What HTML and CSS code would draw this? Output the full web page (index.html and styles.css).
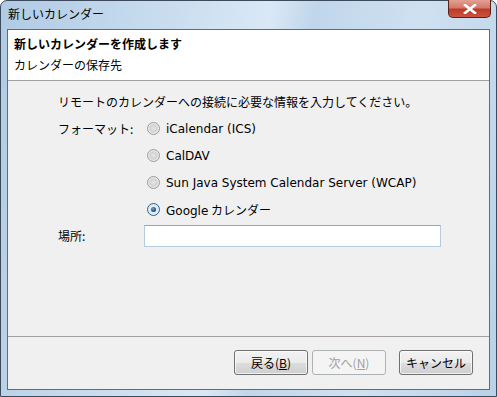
FILE: index.html
```html
<!DOCTYPE html>
<html lang="ja">
<head>
<meta charset="utf-8">
<link rel="stylesheet" href="styles.css">
</head>
<body>
<div class="window">
  <div class="titlebar">
    <span class="title">新しいカレンダー</span>
    <div class="close">
      <svg width="14" height="10" viewBox="0 0 14 10"><path d="M2 1 L12 9 M12 1 L2 9" stroke="#fff" stroke-width="2.6" stroke-linecap="square"/></svg>
    </div>
  </div>
  <div class="client">
    <div class="header">
      <div class="header-title">新しいカレンダーを作成します</div>
      <div class="header-sub">カレンダーの保存先</div>
    </div>
    <div class="body">
      <div class="intro">リモートのカレンダーへの接続に必要な情報を入力してください。</div>
      <div class="form">
        <div class="label">フォーマット:</div>
        <div class="radios">
          <div class="radio-row"><span class="radio"></span><span class="latin">iCalendar (ICS)</span></div>
          <div class="radio-row"><span class="radio"></span><span class="latin">CalDAV</span></div>
          <div class="radio-row"><span class="radio"></span><span class="latin">Sun Java System Calendar Server (WCAP)</span></div>
          <div class="radio-row"><span class="radio checked"></span><span><span class="latin">Google</span> カレンダー</span></div>
        </div>
        <div class="label loc-label">場所:</div>
        <div class="input"></div>
      </div>
    </div>
    <div class="footer">
      <button class="btn">戻る(<u>B</u>)</button>
      <button class="btn disabled">次へ(<u>N</u>)</button>
      <button class="btn cancel">キャンセル</button>
    </div>
  </div>
</div>
</body>
</html>
```
FILE: styles.css
```css
html, body {
  margin: 0;
  padding: 0;
}
body {
  width: 497px;
  height: 397px;
  overflow: hidden;
  font-family: "Noto Sans CJK JP", "DejaVu Sans", sans-serif;
  font-size: 12px;
  color: #000;
  background: #ffffff;
}
.latin {
  font-family: "DejaVu Sans", "Noto Sans CJK JP", sans-serif;
  font-size: 12px;
}
.window {
  box-sizing: border-box;
  width: 497px;
  height: 397px;
  border: 1px solid #3b4b5c;
  border-radius: 7px 7px 0 0;
  background: linear-gradient(100deg, #b0cbe4 0%, #c9ddef 30%, #dae8f5 48%, #c0d6eb 56%, #cfe1f1 75%, #b9d2e9 100%);
  display: flex;
  flex-direction: column;
}
.titlebar {
  height: 28px;
  display: flex;
  justify-content: space-between;
  align-items: flex-start;
  padding-left: 7px;
  padding-right: 5px;
}
.title {
  margin-top: 4px;
  font-size: 12px;
  line-height: 17px;
  color: #000;
}
.close {
  width: 43px;
  height: 18px;
  box-sizing: border-box;
  margin-top: -1px;
  border: 1px solid #5a1f1b;
  border-top: none;
  border-radius: 0 0 5px 5px;
  background: linear-gradient(#e3a093 0%, #d27a6a 45%, #bd3a27 55%, #c9543f 100%);
  display: flex;
  align-items: center;
  justify-content: center;
}
.client {
  flex: 1;
  margin: 0 6px 6px 6px;
  border: 1px solid #5e6d7c;
  background: #f0f0f0;
  display: flex;
  flex-direction: column;
}
.header {
  height: 51px;
  background: #fff;
  border-bottom: 1px solid #a0a0a0;
  padding: 5px 0 0 6px;
  box-sizing: border-box;
}
.header-title {
  font-weight: bold;
  line-height: 18px;
}
.header-sub {
  margin-top: 3px;
  line-height: 18px;
}
.body {
  flex: 1;
  padding: 12px 0 0 50px;
}
.intro {
  line-height: 17px;
}
.form {
  margin-top: 5px;
  display: grid;
  grid-template-columns: 86px 1fr;
}
.label {
  line-height: 27px;
}
.radios {
  display: flex;
  flex-direction: column;
}
.radio-row {
  height: 27px;
  display: flex;
  align-items: center;
  padding-left: 3px;
  gap: 6px;
}
.radio {
  width: 11px;
  height: 11px;
  border-radius: 50%;
  border: 1px solid #9a9a9a;
  background: radial-gradient(circle at 50% 50%, #e6e6e6 0%, #d2d2d2 45%, #f4f4f4 75%);
  flex-shrink: 0;
  display: flex;
  align-items: center;
  justify-content: center;
}
.radio.checked {
  border-color: #2c628b;
  background: radial-gradient(circle at 50% 50%, #e8f0f8 0%, #dfe9f4 60%, #f6f9fc 100%);
}
.radio.checked::after {
  content: "";
  width: 5px;
  height: 5px;
  border-radius: 50%;
  background: radial-gradient(circle at 40% 35%, #6fa6d4 0%, #1c5180 60%, #0f3c66 100%);
}
.loc-label {
  margin-top: 2px;
  line-height: 22px;
}
.input {
  margin-top: 2px;
  width: 297px;
  height: 22px;
  box-sizing: border-box;
  background: #fff;
  border: 1px solid #b5cbe0;
  border-top-color: #8ba7c3;
}
.footer {
  height: 53px;
  box-sizing: border-box;
  border-top: 1px solid #a0a0a0;
  display: flex;
  justify-content: flex-end;
  align-items: flex-start;
  padding: 13px 16px 0 0;
}
.btn {
  width: 74px;
  height: 25px;
  margin: 0;
  padding: 0;
  font-family: inherit;
  font-size: 12px;
  color: #000;
  border: 1px solid #707070;
  border-radius: 3px;
  background: linear-gradient(#f2f2f2 0%, #ebebeb 50%, #dddddd 51%, #cfcfcf 100%);
  box-shadow: inset 0 0 0 1px rgba(255,255,255,0.7);
}
.btn + .btn {
  margin-left: 4px;
}
.btn.disabled {
  color: #a0a0a0;
  border-color: #adb2b5;
  background: #f4f4f4;
  box-shadow: none;
}
.btn.cancel {
  margin-left: 13px;
}
.btn u {
  text-decoration: underline;
}
```
